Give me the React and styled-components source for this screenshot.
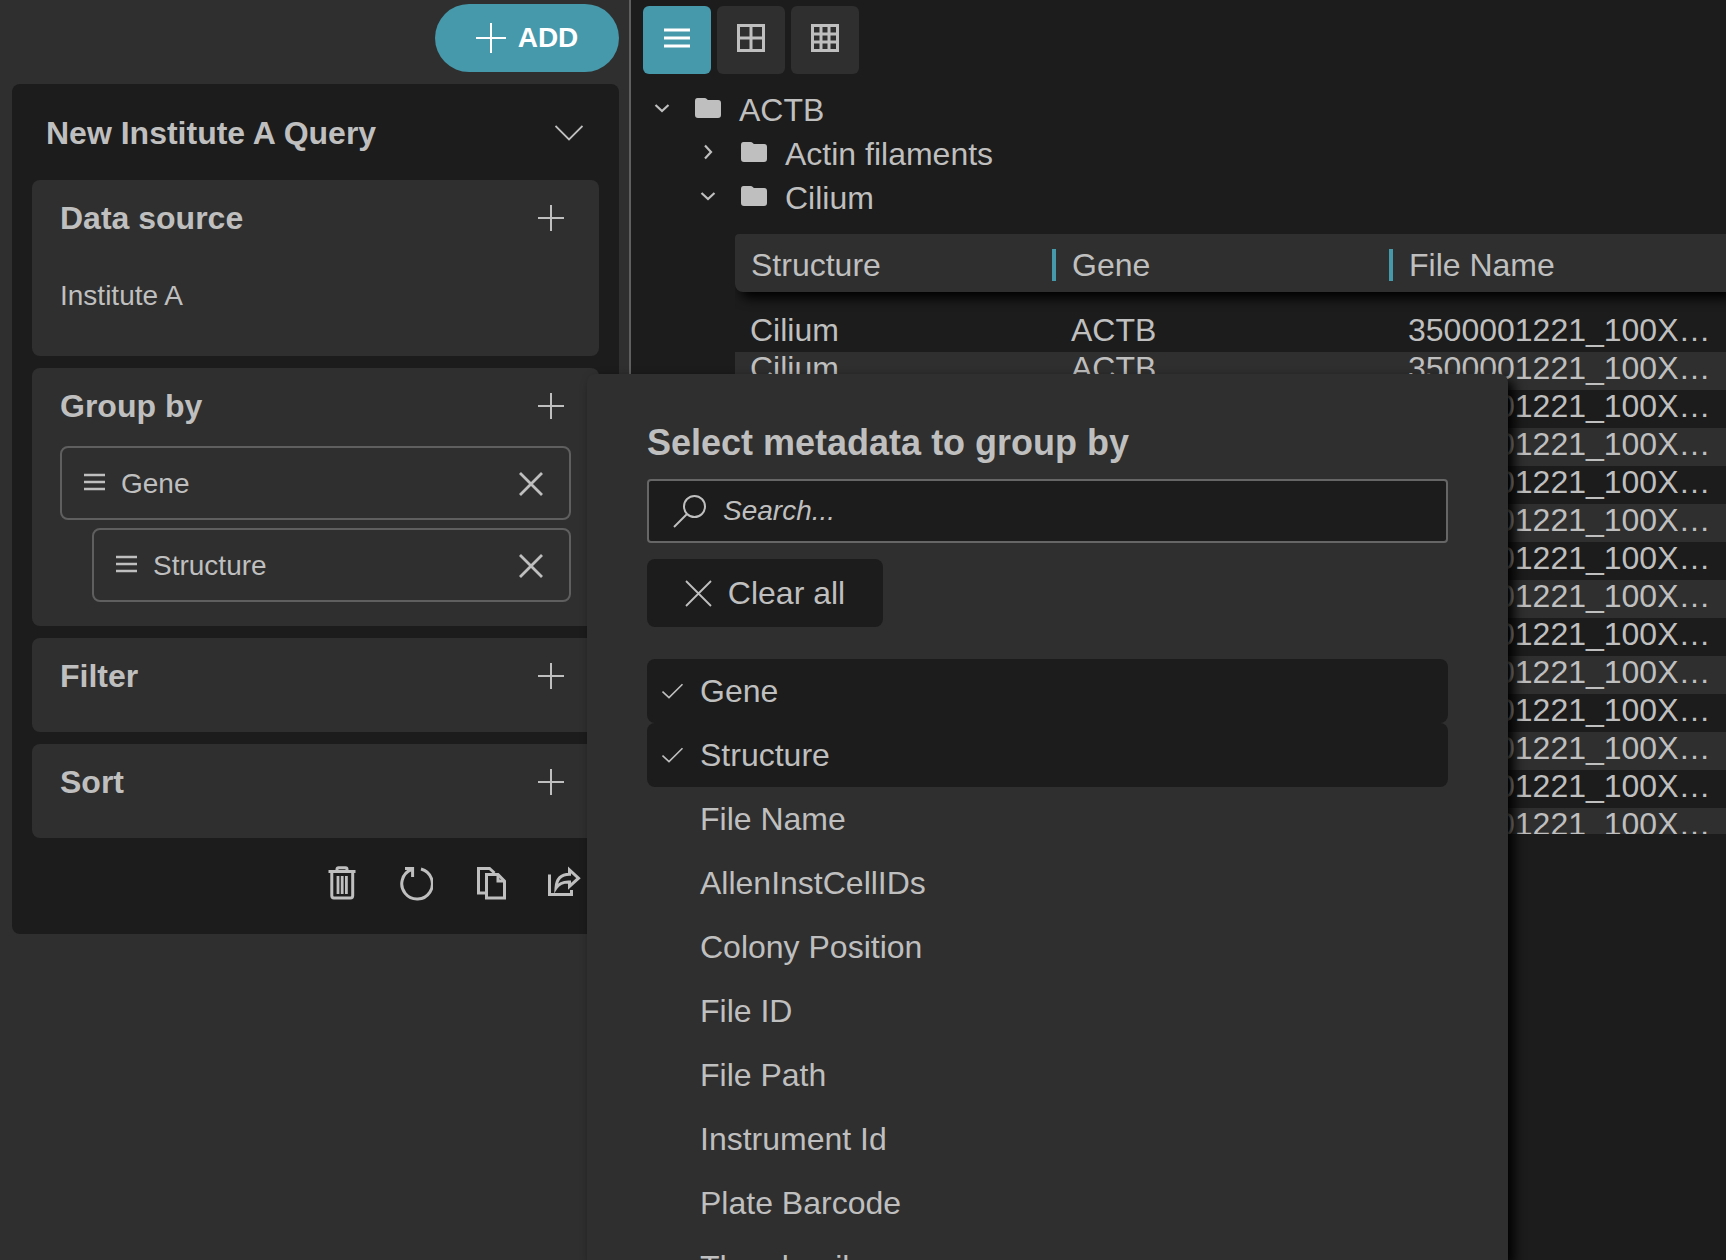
import React from "react";
import styled, { createGlobalStyle, css } from "styled-components";

const color = {
  panel: "#2f2f2f",
  dark: "#1c1c1c",
  text: "#bfbfbf",
  border: "#5f5f5f",
  accent: "#4698ab",
};

const GlobalStyle = createGlobalStyle`
  *, *::before, *::after { box-sizing: border-box; }
  body {
    margin: 0;
    background: ${color.dark};
    color: ${color.text};
    font-family: "Liberation Sans", Arial, Helvetica, sans-serif;
    font-size: 32px;
    line-height: 36px;
  }
  button {
    margin: 0;
    padding: 0;
    border: 0;
    background: none;
    color: inherit;
    font: inherit;
    cursor: pointer;
  }
  svg { display: block; flex: none; }
`;

const Page = styled.div`
  position: relative;
  display: flex;
  height: 100vh;
  overflow: hidden;
`;

const Sidebar = styled.aside`
  display: flex;
  flex: 0 0 631px;
  flex-direction: column;
  gap: 12px;
  padding: 4px 10px 0 12px;
  border-right: 2px solid ${color.border};
  background: ${color.panel};
`;

const AddButton = styled.button`
  display: flex;
  align-items: center;
  align-self: flex-end;
  justify-content: center;
  gap: 12px;
  width: 184px;
  height: 68px;
  border-radius: 34px;
  background: ${color.accent};
  color: #fff;
  font-size: 28px;
  font-weight: bold;
`;

const QueryCard = styled.section`
  display: flex;
  flex-direction: column;
  gap: 12px;
  padding: 0 20px;
  border-radius: 8px;
  background: ${color.dark};
`;

const QueryHeader = styled.header`
  display: flex;
  align-items: center;
  justify-content: space-between;
  height: 84px;
  padding: 14px 16px 0 14px;
`;

const Heading = styled.h2`
  margin: 0;
  font-size: 32px;
  font-weight: bold;
`;

const Part = styled.section`
  padding-bottom: 16px;
  border-radius: 8px;
  background: ${color.panel};
`;

const PartHeader = styled.div`
  display: flex;
  align-items: center;
  justify-content: space-between;
  padding: 20px 28px 22px;
`;

const IconButton = styled.button`
  display: flex;
  align-items: center;
  justify-content: center;
  width: ${(p) => p.$size || 40}px;
  height: 36px;
`;

const ChipList = styled.ul`
  margin: 0;
  padding: 0 28px;
  list-style: none;
`;

const Chip = styled.li`
  display: flex;
  align-items: center;
  gap: 15px;
  height: 74px;
  margin-bottom: 8px;
  margin-left: ${(p) => p.$level * 32}px;
  padding-top: 2px;
  font-size: 28px;
  ${(p) =>
    p.$outlined &&
    css`
      padding: 2px 18px 0 22px;
      border: 2px solid ${color.border};
      border-radius: 8px;
    `}
`;

const ChipLabel = styled.span`
  flex: 1;
`;

const RaisedIcon = styled.span`
  padding-bottom: 4px;
`;

const Actions = styled.div`
  display: flex;
  justify-content: flex-end;
  gap: 38px;
  padding: 16px 18px 32px;
`;

const Main = styled.main`
  flex: 1;
  min-width: 0;
  padding: 6px 0 0 12px;
`;

const Toolbar = styled.div`
  display: flex;
  gap: 6px;
  margin-bottom: 14px;
`;

const ViewButton = styled.button`
  display: flex;
  align-items: center;
  justify-content: center;
  width: 68px;
  height: 68px;
  border-radius: 6px;
  background: ${(p) => (p.$active ? color.accent : color.panel)};
  color: ${(p) => (p.$active ? "#fff" : color.text)};
`;

const Folder = styled.button`
  display: flex;
  align-items: center;
  height: 44px;
  padding-left: ${(p) => 9 + p.$level * 46}px;
`;

const FolderIcons = styled.span`
  display: flex;
  align-items: center;
  gap: 23px;
  padding: 0 18px 4px 0;
`;

const TableFrame = styled.div`
  height: 600px;
  margin: 14px 0 0 92px;
  overflow: hidden;
`;

const Table = styled.table`
  display: block;
  tr {
    display: flex;
  }
`;

const TableHead = styled.thead`
  display: block;
  margin-bottom: 22px;
  padding-top: 4px;
  border-radius: 4px 0 0 8px;
  background: ${color.panel};
  box-shadow: 6px 6px 12px #000;
`;

const columnWidth = css`
  flex: ${(p) => (p.$width ? `0 0 ${p.$width}px` : "1 1 0")};
  text-align: left;
  font-weight: normal;
  white-space: nowrap;
`;

const HeadCell = styled.th`
  ${columnWidth}
  display: flex;
  align-items: center;
  height: 54px;
  padding: 0 0 0 16px;
  &:not(:last-child)::after {
    content: "";
    width: 4px;
    height: 32px;
    margin-left: auto;
    background: ${color.accent};
  }
`;

const TableBody = styled.tbody`
  display: block;
  tr:nth-child(even) {
    background: ${color.panel};
  }
`;

const Cell = styled.td`
  ${columnWidth}
  height: 38px;
  padding: 0 0 6px 15px;
  line-height: 32px;
`;

const Popup = styled.div`
  position: absolute;
  top: 374px;
  bottom: 0;
  left: 587px;
  width: 921px;
  padding: 51px 60px 0;
  overflow: hidden;
  border-radius: 8px 8px 0 0;
  background: ${color.panel};
  box-shadow: 6px 6px 12px #000;
`;

const PopupTitle = styled.h3`
  margin: 0 0 18px;
  font-size: 36px;
  line-height: 36px;
`;

const SearchBox = styled.label`
  display: flex;
  align-items: center;
  gap: 16px;
  height: 64px;
  margin-bottom: 16px;
  padding: 0 24px;
  border: 2px solid #666;
  border-radius: 4px;
  background: ${color.dark};
`;

const SearchInput = styled.input`
  flex: 1;
  min-width: 0;
  padding: 0;
  border: 0;
  outline: 0;
  background: transparent;
  color: ${color.text};
  font: 28px/36px "Liberation Sans", Arial, Helvetica, sans-serif;
  &::placeholder {
    color: ${color.text};
    font-style: italic;
    opacity: 1;
  }
`;

const ClearButton = styled.button`
  display: flex;
  align-items: center;
  justify-content: center;
  gap: 16px;
  width: 236px;
  height: 68px;
  margin-bottom: 32px;
  border-radius: 8px;
  background: ${color.dark};
`;

const Option = styled.label`
  display: flex;
  align-items: center;
  gap: 16px;
  height: 64px;
  padding-left: 15px;
  border-radius: 8px;
  background: ${(p) => (p.$checked ? color.dark : "transparent")};
`;

const OptionBox = styled.input`
  position: absolute;
  opacity: 0;
`;

const OptionMark = styled.span`
  width: 22px;
`;

function Icon({ w, h = w, stroke = 2, children }) {
  return (
    <svg width={w} height={h} viewBox={`0 0 ${w} ${h}`} fill="none" stroke="currentColor" strokeWidth={stroke} aria-hidden="true">
      {children}
    </svg>
  );
}

const Plus = ({ size = 26, stroke = 2 }) => (
  <Icon w={size} stroke={stroke}>
    <path d={`M${size / 2} 0V${size}M0 ${size / 2}H${size}`} />
  </Icon>
);

const Cross = ({ size, stroke }) => (
  <Icon w={size} stroke={stroke}>
    <path d={`M1 1L${size - 1} ${size - 1}M${size - 1} 1L1 ${size - 1}`} />
  </Icon>
);

const Burger = () => (
  <Icon w={22} h={18}>
    <path d="M0 2H21M0 9H21M0 16H21" strokeWidth="2.6" />
  </Icon>
);

const FolderShape = () => (
  <Icon w={26} h={20} stroke={0}>
    <path d="M2.5 0H9.5Q11 0 11.8 1L12.8 2H23.2Q26 2 26 5V17Q26 20 23 20H3Q0 20 0 17V3Q0 0 2.5 0Z" fill="currentColor" />
  </Icon>
);

const Arrow = ({ open }) => (
  <Icon w={20} stroke={2.2}>
    <path d={open ? "M3.5 7L10 13L16.5 7" : "M7 3.5L13 10L7 16.5"} />
  </Icon>
);

const Tick = () => (
  <Icon w={22} h={16} stroke={1.6}>
    <path d="M0.5 8.5L7 14.6L20.5 1.2" />
  </Icon>
);

const actions = [
  {
    name: "Delete query",
    art: (
      <g>
        <path d="M5.5 5.5H32.5M14 5V3.2Q14 1.8 15.5 1.8H22.5Q24 1.8 24 3.2V5" />
        <path d="M8.8 5.5V29.5Q8.8 32 11 32H27.5Q29.7 32 29.7 29.5V5.5" strokeWidth="3" />
        <path d="M15 10V28M19.2 10V28M23.4 10V28" strokeWidth="2.8" />
      </g>
    ),
  },
  {
    name: "Refresh query",
    art: (
      <g>
        <path d="M24 3A15.3 15.3 0 1 1 14.6 3.5" />
        <path d="M8 2.4H15.6V11" />
      </g>
    ),
  },
  {
    name: "Duplicate query",
    art: (
      <g>
        <path d="M15 27H7.5V2.4H18.5L23.5 7" />
        <path d="M15.5 8.4H27L33.5 15V32H15.5Z" />
        <path d="M27 8.4V15H33.5" />
      </g>
    ),
  },
  {
    name: "Share query",
    art: (
      <g>
        <path d="M4.5 8.5V28.6H26.5V24" />
        <path d="M11 22C11.5 13 16.5 8.3 24.5 8.3V4L33.5 12.2L24.5 20.4V16C18 15.7 14 17.5 11 22Z" />
      </g>
    ),
  },
];

const groups = ["Gene", "Structure"];
const options = [
  "Gene",
  "Structure",
  "File Name",
  "AllenInstCellIDs",
  "Colony Position",
  "File ID",
  "File Path",
  "Instrument Id",
  "Plate Barcode",
  "Thumbnail",
];
const columns = [
  { name: "Structure", width: 321, value: "Cilium" },
  { name: "Gene", width: 337, value: "ACTB" },
  { name: "File Name", value: "3500001221_100X…" },
];
const files = Array.from({ length: 14 }, (_, i) => i);
const folders = [
  { name: "ACTB", level: 0, open: true },
  { name: "Actin filaments", level: 1, open: false },
  { name: "Cilium", level: 1, open: true },
];

function QueryPart({ title, children }) {
  return (
    <Part>
      <PartHeader>
        <Heading as="h3">{title}</Heading>
        <IconButton aria-label={`Add ${title}`}>
          <Plus />
        </IconButton>
      </PartHeader>
      {children}
    </Part>
  );
}

export default function App() {
  return (
    <Page>
      <GlobalStyle />
      <Sidebar>
        <AddButton>
          <Plus size={30} />
          ADD
        </AddButton>
        <QueryCard>
          <QueryHeader>
            <Heading>New Institute A Query</Heading>
            <IconButton $size={28} aria-label="Collapse query">
              <Icon w={28} h={16} stroke={1.8}>
                <path d="M0.5 1L14 14.5L27.5 1" />
              </Icon>
            </IconButton>
          </QueryHeader>
          <QueryPart title="Data source">
            <ChipList>
              <Chip $level={0}>Institute A</Chip>
            </ChipList>
          </QueryPart>
          <QueryPart title="Group by">
            <ChipList>
              {groups.map((name, level) => (
                <Chip key={name} $level={level} $outlined>
                  <RaisedIcon>
                    <Burger />
                  </RaisedIcon>
                  <ChipLabel>{name}</ChipLabel>
                  <IconButton aria-label={`Remove ${name}`}>
                    <Cross size={24} stroke={2.8} />
                  </IconButton>
                </Chip>
              ))}
            </ChipList>
          </QueryPart>
          <QueryPart title="Filter" />
          <QueryPart title="Sort" />
          <Actions>
            {actions.map(({ name, art }) => (
              <IconButton key={name} $size={36} aria-label={name}>
                <Icon w={36} stroke={3}>
                  {art}
                </Icon>
              </IconButton>
            ))}
          </Actions>
        </QueryCard>
      </Sidebar>

      <Main>
        <Toolbar>
          <ViewButton $active aria-label="List view">
            <RaisedIcon>
              <Icon w={26} h={20} stroke={3}>
                <path d="M0 2H26M0 10H26M0 18H26" />
              </Icon>
            </RaisedIcon>
          </ViewButton>
          <ViewButton aria-label="Large thumbnails">
            <RaisedIcon>
              <Icon w={28} stroke={3}>
                <path d="M1.5 1.5H26.5V26.5H1.5ZM14 1V27M1 14H27" />
              </Icon>
            </RaisedIcon>
          </ViewButton>
          <ViewButton aria-label="Small thumbnails">
            <RaisedIcon>
              <Icon w={28} stroke={3}>
                <path d="M1.5 1.5H26.5V26.5H1.5ZM10 1V27M18 1V27M1 10H27M1 18H27" />
              </Icon>
            </RaisedIcon>
          </ViewButton>
        </Toolbar>
        {folders.map(({ name, level, open }) => (
          <Folder key={name} $level={level} aria-expanded={open}>
            <FolderIcons>
              <Arrow open={open} />
              <FolderShape />
            </FolderIcons>
            {name}
          </Folder>
        ))}
        <TableFrame>
          <Table>
            <TableHead>
              <tr>
                {columns.map(({ name, width }) => (
                  <HeadCell key={name} $width={width} scope="col">
                    {name}
                  </HeadCell>
                ))}
              </tr>
            </TableHead>
            <TableBody>
              {files.map((file) => (
                <tr key={file}>
                  {columns.map(({ name, width, value }) => (
                    <Cell key={name} $width={width}>
                      {value}
                    </Cell>
                  ))}
                </tr>
              ))}
            </TableBody>
          </Table>
        </TableFrame>
      </Main>

      <Popup role="dialog" aria-labelledby="group-title">
        <PopupTitle id="group-title">Select metadata to group by</PopupTitle>
        <SearchBox>
          <Icon w={34} h={34} stroke={2}>
            <circle cx="21.5" cy="12.5" r="10.5" />
            <path d="M14 20L1 33" />
          </Icon>
          <SearchInput type="search" placeholder="Search..." aria-label="Search metadata" />
        </SearchBox>
        <ClearButton>
          <Cross size={27} stroke={1.8} />
          Clear all
        </ClearButton>
        {options.map((name) => {
          const checked = groups.includes(name);
          return (
            <Option key={name} $checked={checked}>
              <OptionBox type="checkbox" defaultChecked={checked} />
              <OptionMark>{checked && <Tick />}</OptionMark>
              {name}
            </Option>
          );
        })}
      </Popup>
    </Page>
  );
}
